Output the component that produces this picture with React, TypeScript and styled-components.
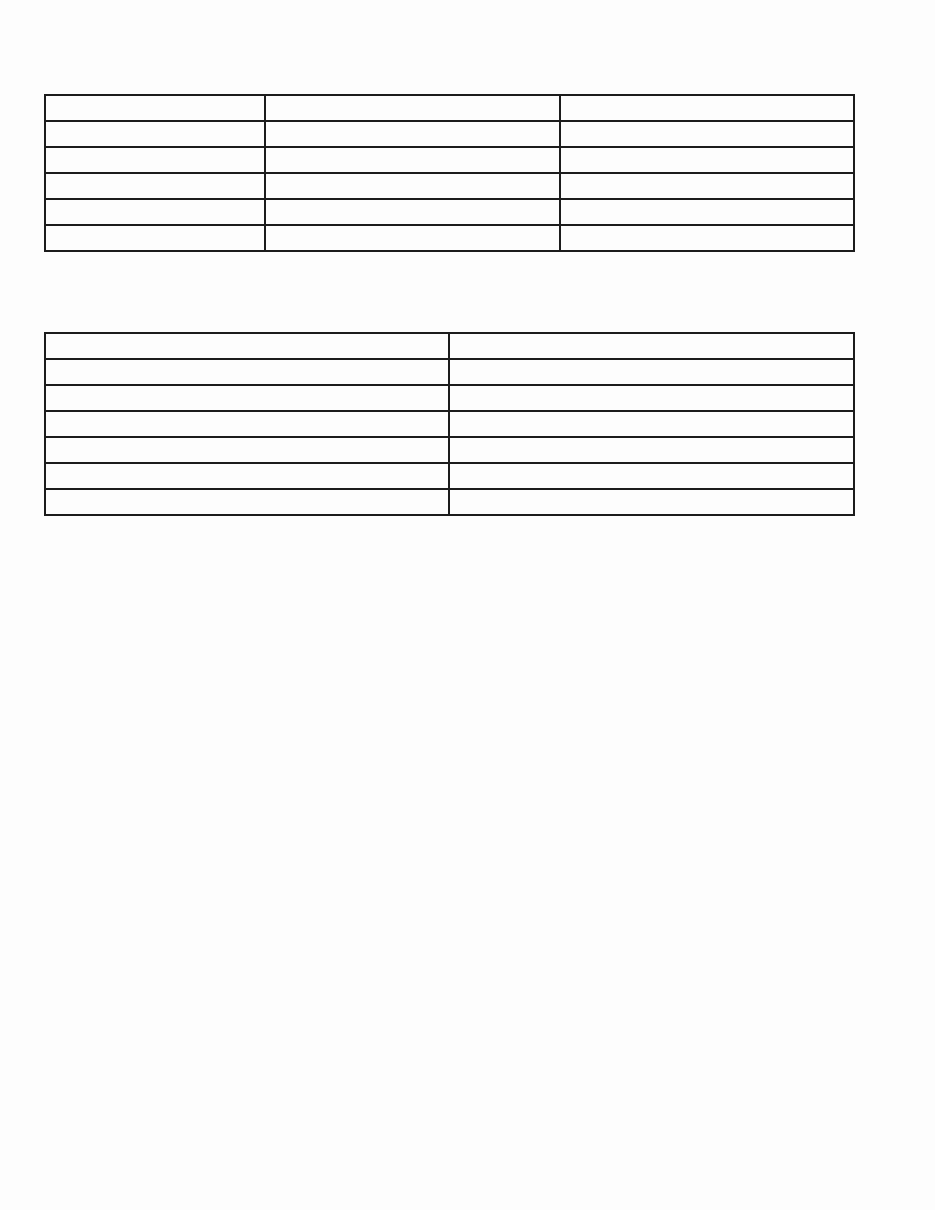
import React from "react";
import styled, { createGlobalStyle } from "styled-components";

const GlobalStyle = createGlobalStyle`
  html, body {
    margin: 0;
    padding: 0;
    background: #fdfdfd;
  }
  body {
    font-family: "Liberation Sans", Arial, sans-serif;
    font-size: 13px;
    color: #111;
  }
`;

const Page = styled.main`
  display: flex;
  flex-direction: column;
  gap: 80px;
  padding: 94px 0 0 44px;
  width: 809px;
`;

const Table = styled.table`
  width: 809px;
  border-collapse: collapse;
  table-layout: fixed;
  border: 2px solid #1c1c1c;
`;

const Cell = styled.td`
  height: 26px;
  padding: 0 6px;
  border: 2px solid #1c1c1c;
  box-sizing: border-box;
  font-size: 13px;
  line-height: 1;
`;

const Col = styled.col<{ $w: string }>`
  width: ${(p) => p.$w};
`;

const firstTable = Array.from({ length: 6 }, () => ["", "", ""]);
const secondTable = Array.from({ length: 7 }, () => ["", ""]);

export default function App() {
  return (
    <>
      <GlobalStyle />
      <Page>
        <Table>
          <colgroup>
            <Col $w="220px" />
            <Col $w="295px" />
            <Col $w="294px" />
          </colgroup>
          <tbody>
            {firstTable.map((row, i) => (
              <tr key={i}>
                {row.map((c, j) => (
                  <Cell key={j}>{c}</Cell>
                ))}
              </tr>
            ))}
          </tbody>
        </Table>
        <Table>
          <colgroup>
            <Col $w="404px" />
            <Col $w="405px" />
          </colgroup>
          <tbody>
            {secondTable.map((row, i) => (
              <tr key={i}>
                {row.map((c, j) => (
                  <Cell key={j}>{c}</Cell>
                ))}
              </tr>
            ))}
          </tbody>
        </Table>
      </Page>
    </>
  );
}
